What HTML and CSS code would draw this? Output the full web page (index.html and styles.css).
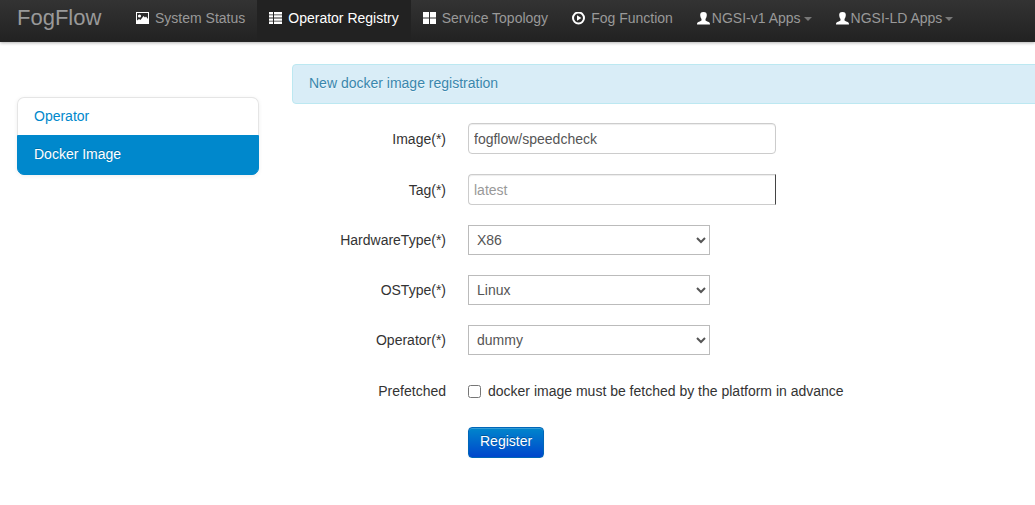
FILE: index.html
```html
<!DOCTYPE html>
<html lang="en">
<head>
<meta charset="utf-8">
<title>FogFlow</title>
<link rel="stylesheet" href="styles.css">
</head>
<body>
<header class="navbar">
  <a class="brand" href="#">FogFlow</a>
  <nav class="nav">
    <a class="nav-link" href="#"><svg class="icon" viewBox="0 0 13 13"><path fill="#fff" fill-rule="evenodd" d="M0 0h13v12H0zM1 1v7.500l2-1.500 1.500 1L7.500 4 9 5.500l1-1 2 2.500V1z"/><circle cx="3.500" cy="4" r="1.600" fill="#fff"/></svg>System Status</a>
    <a class="nav-link active" href="#"><svg class="icon" viewBox="0 0 13 13" fill="#fff"><path d="M0 0h4v2.400H0zM5 0h8v2.400H5zM0 3.200h4v2.400H0zM5 3.200h8v2.400H5zM0 6.400h4v2.400H0zM5 6.400h8v2.400H5zM0 9.600h4V12H0zM5 9.600h8V12H5z"/></svg>Operator Registry</a>
    <a class="nav-link" href="#"><svg class="icon" viewBox="0 0 13 13" fill="#fff"><path d="M0 0h6v5.500H0zM7 0h6v5.500H7zM0 6.500h6V12H0zM7 6.500h6V12H7z"/></svg>Service Topology</a>
    <a class="nav-link" href="#"><svg class="icon" viewBox="0 0 13 13"><circle cx="6.500" cy="6" r="5.500" fill="none" stroke="#fff" stroke-width="2"/><path fill="#fff" d="M5 3.300l4.400 2.700L5 8.700z"/></svg>Fog Function</a>
    <a class="nav-link dropdown" href="#"><svg class="icon" viewBox="0 0 13 13" fill="#fff"><path d="M6.500 0C8.900 0 10 1.200 9.800 3.300C9.600 5.200 9.200 6.200 8.500 7v1.300c.2.700 1.400 1 2.600 1.500 1.500.6 1.900 1.200 1.900 2.700H0c0-1.500.4-2.100 1.900-2.700C3.100 9.300 4.300 9 4.500 8.300V7C3.800 6.200 3.400 5.200 3.200 3.300 3 1.200 4.100 0 6.500 0z"/></svg>NGSI-v1 Apps<span class="caret"></span></a>
    <a class="nav-link dropdown" href="#"><svg class="icon" viewBox="0 0 13 13" fill="#fff"><path d="M6.500 0C8.900 0 10 1.200 9.800 3.300C9.600 5.200 9.200 6.200 8.500 7v1.300c.2.700 1.400 1 2.600 1.500 1.500.6 1.900 1.200 1.900 2.700H0c0-1.500.4-2.100 1.900-2.700C3.100 9.300 4.300 9 4.500 8.300V7C3.800 6.200 3.400 5.200 3.200 3.300 3 1.200 4.100 0 6.500 0z"/></svg>NGSI-LD Apps<span class="caret"></span></a>
  </nav>
</header>
<div class="layout">
  <nav class="sidebar">
    <a class="side-link" href="#">Operator</a>
    <a class="side-link selected" href="#">Docker Image</a>
  </nav>
  <main class="content">
    <div class="alert">New docker image registration</div>
    <form class="form">
      <div class="row">
        <label class="label" for="image">Image(*)</label>
        <input class="field" id="image" type="text" value="fogflow/speedcheck">
      </div>
      <div class="row">
        <label class="label" for="tag">Tag(*)</label>
        <input class="field field-tag" id="tag" type="text" placeholder="latest">
      </div>
      <div class="row">
        <label class="label" for="hardware">HardwareType(*)</label>
        <select class="select" id="hardware"><option>X86</option><option>ARM</option></select>
      </div>
      <div class="row">
        <label class="label" for="os">OSType(*)</label>
        <select class="select" id="os"><option>Linux</option><option>Windows</option></select>
      </div>
      <div class="row">
        <label class="label" for="operator">Operator(*)</label>
        <select class="select" id="operator"><option>dummy</option></select>
      </div>
      <div class="row">
        <span class="label">Prefetched</span>
        <label class="check"><input class="checkbox" type="checkbox">docker image must be fetched by the platform in advance</label>
      </div>
      <div class="row">
        <span class="label"></span>
        <button class="button" type="button">Register</button>
      </div>
    </form>
  </main>
</div>
</body>
</html>
```
FILE: styles.css
```css
* { box-sizing: border-box; }
body {
  margin: 0;
  background: #fff;
  color: #333;
  font: 14px/20px "Liberation Sans", Arial, sans-serif;
  overflow-x: hidden;
}
a { text-decoration: none; }
.navbar {
  display: flex;
  height: 42px;
  padding-left: 17px;
  background: linear-gradient(#333, #222);
  border-bottom: 1px solid #252525;
  box-shadow: 0 1px 3px rgba(0, 0, 0, .3);
}
.brand {
  width: 107px;
  font-size: 22px;
  line-height: 35px;
  color: #999;
}
.nav { display: flex; white-space: nowrap; }
.nav-link {
  display: flex;
  align-items: center;
  gap: 6px;
  padding: 0 12px 5px;
  color: #999;
}
.nav-link.active { background: #222; color: #fff; }
.dropdown { gap: 2px; }
.icon { width: 13px; height: 13px; flex: none; }
.caret {
  margin: 2px 0 0 1px;
  border: 4px solid transparent;
  border-top-color: #777;
  border-bottom: 0;
}
.layout {
  display: flex;
  align-items: flex-start;
  gap: 33px;
  padding: 22px 0 0 17px;
}
.sidebar {
  flex: none;
  width: 242px;
  margin-top: 33px;
  border-radius: 7px;
  box-shadow: 0 1px 4px rgba(0, 0, 0, .07);
}
.side-link {
  display: block;
  padding: 8px 16px 9px;
  border: 1px solid #e5e5e5;
  border-bottom: 0;
  color: #0088cc;
}
.side-link:first-child { border-radius: 7px 7px 0 0; }
.side-link:last-child { border-radius: 0 0 7px 7px; }
.side-link.selected {
  padding-bottom: 10px;
  border: 1px solid #0088cc;
  background: #0088cc;
  color: #fff;
  text-shadow: 0 -1px 0 rgba(0, 0, 0, .2);
}
.content { flex: 1; min-width: 0; }
.alert {
  margin-right: -16px;
  padding: 8px 16px 10px;
  border: 1px solid #bce8f1;
  border-radius: 4px;
  background: #d9edf7;
  color: #3a87ad;
  text-shadow: 0 1px 0 rgba(255, 255, 255, .5);
}
.form {
  display: flex;
  flex-direction: column;
  gap: 20px;
  padding-top: 19px;
}
.row { display: flex; align-items: center; gap: 22px; }
.label { width: 154px; text-align: right; }
.field {
  width: 308px;
  height: 31px;
  padding: 4px 5px;
  border: 1px solid #ccc;
  border-radius: 4px;
  box-shadow: inset 0 1px 1px rgba(0, 0, 0, .075);
  color: #555;
  font: inherit;
}
.field-tag {
  border-right-color: #444;
  border-radius: 4px 0 0 4px;
}
.field::placeholder { color: #999; }
.select {
  width: 242px;
  height: 30px;
  padding: 4px;
  border: 1px solid #bbb;
  border-radius: 0;
  background: #fff;
  color: #555;
  font: inherit;
}
.check { display: flex; align-items: center; gap: 7px; padding: 6px 0; }
.checkbox { width: 13px; height: 13px; margin: 0; }
.button {
  height: 31px;
  padding: 3px 11px 6px;
  border: 1px solid #0066b8;
  border-radius: 4px;
  background: linear-gradient(#0088cc, #0044cc) border-box;
  box-shadow: inset 0 1px 0 rgba(255, 255, 255, .2), 0 1px 2px rgba(0, 0, 0, .05);
  color: #fff;
  font: inherit;
  text-shadow: 0 -1px 0 rgba(0, 0, 0, .25);
}
```
